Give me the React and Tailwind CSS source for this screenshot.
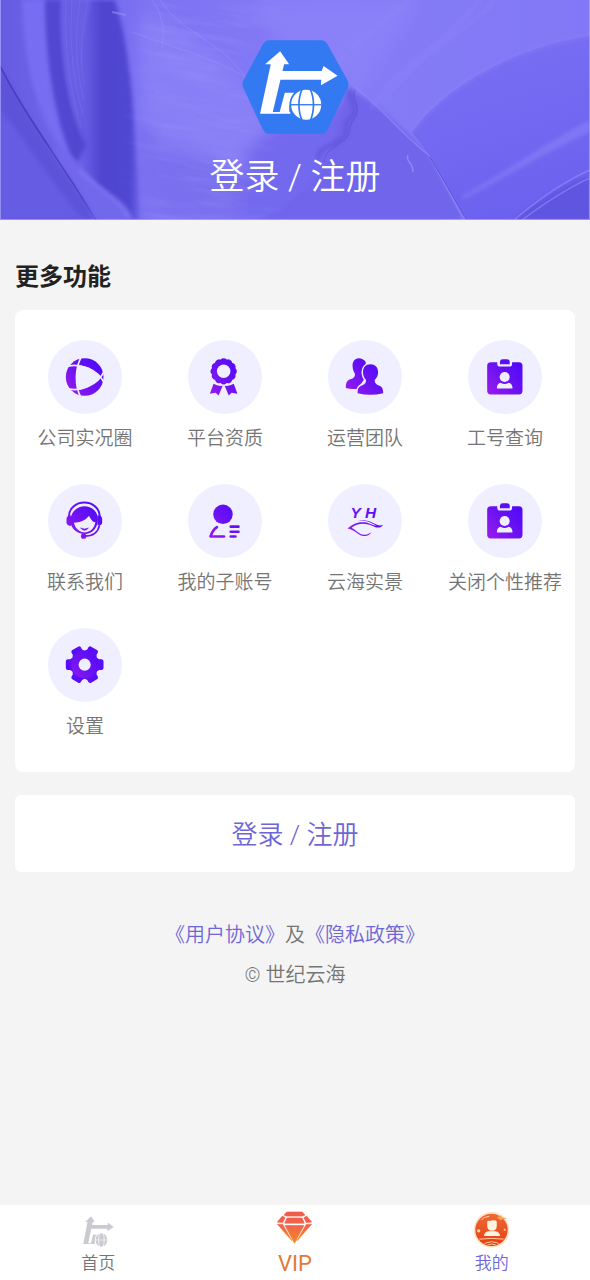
import React from 'react';

const FONT = 'font-[Roboto,"Noto_Sans_CJK_SC",sans-serif]';
const TILE = '#f0efff';

// The road / globe mark, shared by the header logo and the home tab
const LogoMark = ({ color, gap }) => (
  <g>
    <g fill={color}>
      <path d="M150 63L177 102H162L157 122H274L280 107L322 136L272 165L273 148H151L128 245H180L181 250H90L122 102H105Z" />
      <path d="M164 187H192C180 200 175 216 178 248H148Z" />
      <circle cx="228" cy="223" r="45" />
    </g>
    <g fill="none" stroke={gap} strokeWidth="5">
      <path d="M216 176C203 205 203 242 216 271M240 176C253 205 253 242 240 271" />
      <path d="M182 223H274" strokeWidth="4" />
    </g>
  </g>
);

const Logo = () => (
  <svg viewBox="36 27 320 286" className="w-[107px] h-24" aria-hidden="true">
    <path d="M118 42H272Q278 42 281 48L341 156Q344 162 341 168L281 292Q278 298 272 298H118Q112 298 109 292L51 168Q48 162 51 156L109 48Q112 42 118 42Z" fill="#337af2" stroke="#337af2" strokeWidth="24" strokeLinejoin="round" />
    <LogoMark color="#fff" gap="#337af2" />
  </svg>
);

// Brushed paint texture behind the header
const HeaderArt = () => (
  <svg viewBox="0 0 590 220" preserveAspectRatio="none" className="absolute inset-0 w-full h-full" aria-hidden="true">
    <defs>
      <linearGradient id="base" x1="0" y1="0" x2="1" y2="0">
        <stop offset="0" stopColor="#665ce2" />
        <stop offset="0.14" stopColor="#7168ee" />
        <stop offset="0.26" stopColor="#7d73f3" />
        <stop offset="0.55" stopColor="#857cf7" />
        <stop offset="1" stopColor="#8278f6" />
      </linearGradient>
      <linearGradient id="fold" x1="0" y1="0" x2="1" y2="0">
        <stop offset="0" stopColor="#4f45cf" stopOpacity="0" />
        <stop offset="0.4" stopColor="#4f45cf" />
        <stop offset="0.85" stopColor="#5046d2" />
        <stop offset="1" stopColor="#5e54dd" stopOpacity="0.5" />
      </linearGradient>
      <linearGradient id="wing" x1="0" y1="0" x2="0.3" y2="1">
        <stop offset="0" stopColor="#7b71f4" />
        <stop offset="1" stopColor="#6c62ef" />
      </linearGradient>
      <filter id="soft2"><feGaussianBlur stdDeviation="2" /></filter>
      <filter id="soft7"><feGaussianBlur stdDeviation="7" /></filter>
      <filter id="grain" x="0" y="0" width="100%" height="100%" colorInterpolationFilters="sRGB">
        <feTurbulence type="fractalNoise" baseFrequency="0.014 0.12" numOctaves="3" seed="4" />
        <feColorMatrix values="0 0 0 0 0.64  0 0 0 0 0.6  0 0 0 0 1  2.4 0 0 0 -1" />
      </filter>
      <linearGradient id="fade" x1="0" y1="0" x2="1" y2="0">
        <stop offset="0" stopColor="#fff" stopOpacity="0" />
        <stop offset="0.25" stopColor="#fff" />
        <stop offset="0.7" stopColor="#fff" />
        <stop offset="1" stopColor="#fff" stopOpacity="0" />
      </linearGradient>
      <mask id="brush" maskUnits="userSpaceOnUse" x="120" y="0" width="170" height="220">
        <rect x="120" y="0" width="170" height="220" fill="url(#fade)" />
      </mask>
    </defs>
    <rect width="590" height="220" fill="url(#base)" />
    <g filter="url(#soft7)">
      <path d="M140 10C200 40 240 60 268 130L230 160L140 120Z" fill="#8c83f7" opacity="0.7" />
      <path d="M140 130L240 160V220H145Z" fill="#7a70ef" />
      <path d="M240 150L345 85L460 220H240Z" fill="#7369ee" />
      <path d="M250 0H420L350 110L290 60Z" fill="#8c82f8" opacity="0.7" />
      <path d="M150 130L230 118L262 140L236 168L160 150Z" fill="#8a80f6" opacity="0.6" />
    </g>
    <path d="M22 0H46C48 70 58 130 74 162C40 130 24 70 22 0Z" fill="#776df2" filter="url(#soft2)" />
    <path d="M45 0H62C60 60 72 110 86 145L76 166C54 120 46 60 45 0Z" fill="#5147d0" filter="url(#soft2)" />
    <path d="M62 0H98C84 40 78 90 84 140C66 100 60 50 62 0Z" fill="#695fe4" filter="url(#soft2)" />
    <path d="M92 0H115C134 60 136 150 140 220H128C100 190 82 170 76 156C78 90 84 40 92 0Z" fill="url(#fold)" filter="url(#soft2)" />
    <path d="M0 66C30 120 60 165 100 220H0Z" fill="#5d53d9" filter="url(#soft2)" />
    <path d="M0 110C30 145 48 180 84 220H0Z" fill="#665ce4" filter="url(#soft2)" />
    <path d="M0 66C28 120 50 145 96 220" fill="none" stroke="#453bbb" strokeWidth="1.5" />
    <path d="M76 160C92 190 125 195 134 220H94C86 195 66 170 50 145Z" fill="#7268ec" filter="url(#soft2)" />
    <path d="M78 170C100 190 120 198 130 220" fill="none" stroke="#958cfa" strokeWidth="2" opacity="0.6" filter="url(#soft2)" />
    <path d="M66 0C64 50 70 90 82 130M72 0C69 45 73 80 83 115M80 0C74 40 76 70 84 100M88 0C80 40 80 60 84 85" fill="none" stroke="#8a81f6" strokeWidth="1" opacity="0.25" />

    <path d="M345 88C370 98 400 125 429 155L464 220H260C300 200 330 170 334 140C338 115 344 110 345 88Z" fill="#6f65eb" filter="url(#soft2)" />
    <path d="M352 85C380 104 400 134 429 155L464 220" fill="none" stroke="#938af8" strokeWidth="1.2" opacity="0.7" />
    <path d="M430 157L467 220" fill="none" stroke="#574dd2" strokeWidth="1" />
    <path d="M352 88C344 100 362 106 350 118C340 130 352 132 340 140C330 148 318 146 318 160" fill="none" stroke="#5c52d6" strokeWidth="3" filter="url(#soft2)" />
    <path d="M355 90C350 101 364 107 353 120C347 130 353 135 341 142C332 149 325 152 324 162" fill="none" stroke="#574dcf" strokeWidth="1" opacity="0.6" />
    <path d="M408 155C405 162 413 161 413 172" fill="none" stroke="#a49cff" strokeWidth="1.5" opacity="0.6" />
    <path d="M412 132C445 85 520 45 590 36V220H468L430 156Z" fill="url(#wing)" />
    <path d="M412 132C445 85 520 45 590 36" fill="none" stroke="#8f86f9" strokeWidth="2" opacity="0.6" filter="url(#soft2)" />
    <path d="M462 196C500 175 550 140 590 120V132C550 150 500 180 462 200Z" fill="#8b82f8" opacity="0.6" filter="url(#soft2)" />
    <path d="M512 220C540 200 565 183 590 176V220Z" fill="#5f55e0" filter="url(#soft2)" />
    <path d="M514 220C540 198 565 181 590 170M522 220C545 203 570 187 590 178" fill="none" stroke="#a098fb" strokeWidth="1.5" opacity="0.5" />
    <path d="M160 0C180 32 225 44 246 78M152 0C165 20 164 30 162 48M246 78C220 60 180 50 132 32" fill="none" stroke="#a098fc" strokeWidth="1" opacity="0.4" />
    <path d="M112 12L126 15" stroke="#a39bff" strokeWidth="2" opacity="0.5" />
    <path d="M370 110C400 60 430 60 480 0M385 100C420 50 470 30 495 0M320 80C350 50 370 30 410 0" fill="none" stroke="#9c94fc" strokeWidth="2" opacity="0.35" filter="url(#soft2)" />
    <g mask="url(#brush)">
      <rect x="100" y="-40" width="220" height="300" filter="url(#grain)" opacity="0.25" transform="rotate(10 200 110)" />
    </g>
    <path d="M0.5 0V219.5H589.5V0" fill="none" stroke="#b9b4ff" opacity="0.6" />
  </svg>
);

const CircleIcon = () => (
  <g>
    <circle cx="109" cy="110" r="56" />
    <path d="M88 75C115 76 142 90 155 110C142 130 115 146 88 149C82 125 82 99 88 75Z" fill={TILE} />
    <path d="M99 50C80 85 80 135 97 170M50 80C90 66 150 86 168 130M50 142C90 158 150 136 168 90" fill="none" stroke={TILE} strokeWidth="5" />
  </g>
);

const AwardIcon = () => (
  <g>
    {[0, 30, 60, 90, 120, 150, 180, 210, 240, 270, 300, 330].map((a) => (
      <circle key={a} cx="106" cy="64" r="10" transform={`rotate(${a} 106 93)`} />
    ))}
    <circle cx="106" cy="93" r="36" />
    <circle cx="106" cy="93" r="20" fill={TILE} />
    <path d="M76 130Q88 138 103 136L91 165L82 157L65 160Z" />
    <path d="M136 130Q124 138 109 136L121 165L130 157L147 160Z" />
  </g>
);

const TeamIcon = () => (
  <g>
    <path d="M92 54C80 54 73 63 73 76C73 87 76 94 80 100C80 110 77 113 66 117C56 121 53 127 53 143Q68 147 88 145L112 110V65Q104 54 92 54Z" />
    <path d="M126 72C112 72 104 82 104 95C104 107 108 113 113 119C113 129 109 132 99 136C90 140 88 146 88 158Q126 167 164 158C164 146 162 140 153 136C143 132 139 129 139 119C144 113 149 107 149 95C149 82 140 72 126 72Z" stroke={TILE} strokeWidth="9" paintOrder="stroke" />
  </g>
);

const BadgeIcon = () => (
  <g>
    <rect x="57" y="66" width="105" height="96" rx="11" />
    <rect x="87" y="50" width="44" height="29" rx="8" fill={TILE} />
    <path d="M95 72V64Q96 57 103 57H116Q123 57 124 64V72Z" />
    <circle cx="109" cy="110" r="15" fill={TILE} />
    <path d="M86 144V139Q88 129 97 127Q109 134 121 127Q130 129 132 139V144Z" fill={TILE} />
  </g>
);

const ServiceIcon = () => (
  <g>
    <path d="M62 98C63 41 153 41 154 98" fill="none" stroke="url(#purple)" strokeWidth="6" />
    <path d="M69 94V124H64Q55 122 55 114V104Q55 96 64 94Z" />
    <path d="M147 94V124H152Q161 122 161 114V104Q161 96 152 94Z" />
    <path d="M68 120C62 88 84 66 108 66C132 66 151 84 148 110C146 135 128 149 108 149C88 147 73 137 68 120Z" />
    <path d="M77 115C94 115 112 108 121 95C126 98 128 112 141 114C138 131 126 144 108 144C92 142 80 130 77 115Z" fill={TILE} />
    <path d="M97 131Q108 137 120 131Q109 144 97 131Z" stroke="url(#purple)" strokeWidth="2" />
    <path d="M153 122C149 144 132 155 108 155" fill="none" stroke={TILE} strokeWidth="11" />
    <path d="M153 122C149 144 132 155 108 155" fill="none" stroke="url(#purple)" strokeWidth="5" />
    <circle cx="106" cy="155" r="8" />
  </g>
);

const SubAccountIcon = () => (
  <g>
    <circle cx="104" cy="90" r="29" />
    <path d="M86 128C77 134 71 143 67 156H107M127 127H150M127 142H150M127 156H141" fill="none" stroke="url(#purple)" strokeWidth="8" strokeLinecap="round" strokeLinejoin="round" />
  </g>
);

const YunhaiIcon = () => (
  <g>
    <text x="67" y="101" fontSize="46" fontWeight="700" fontStyle="italic" fontFamily="Liberation Sans, sans-serif">Y</text>
    <text x="110" y="101" fontSize="46" fontWeight="700" fontStyle="italic" fontFamily="Liberation Sans, sans-serif">H</text>
    <path d="M88 111C112 103 128 113 142 120C150 124 157 124 164 121C157 132 147 131 136 126C113 115 88 115 70 130C84 137 92 150 107 151C118 152 124 147 129 142C124 153 114 157 102 154C87 150 79 135 58 132C73 119 89 111 110 114C122 116 134 124 145 125C132 117 112 105 88 111Z" />
  </g>
);

const GearIcon = () => (
  <g>
    {[0, 60, 120, 180, 240, 300].map((a) => (
      <path key={a} d="M140 85L152 93H160Q165 94 165 99V119Q165 124 160 125H152L140 133Z" transform={`rotate(${a} 109 109)`} />
    ))}
    <circle cx="109" cy="109" r="40" />
    <circle cx="109" cy="109" r="18" fill={TILE} />
  </g>
);

const features = [
  { label: '公司实况圈', icon: CircleIcon },
  { label: '平台资质', icon: AwardIcon },
  { label: '运营团队', icon: TeamIcon },
  { label: '工号查询', icon: BadgeIcon },
  { label: '联系我们', icon: ServiceIcon },
  { label: '我的子账号', icon: SubAccountIcon },
  { label: '云海实景', icon: YunhaiIcon },
  { label: '关闭个性推荐', icon: BadgeIcon },
  { label: '设置', icon: GearIcon },
];

const Feature = ({ label, icon: Icon }) => (
  <button type="button" className="flex flex-col items-center gap-[11px] pb-[31px]">
    <span className="w-[74px] h-[74px] rounded-full bg-[#f0efff]">
      <svg viewBox="0 0 220 220" className="w-full h-full" fill="url(#purple)" aria-hidden="true">
        <Icon />
      </svg>
    </span>
    <span className="text-[19px] leading-7 text-[#757575] whitespace-nowrap">{label}</span>
  </button>
);

const DiamondIcon = () => (
  <svg viewBox="650 33 110 98" className="w-[37px] h-[33px]" aria-hidden="true">
    <defs>
      <linearGradient id="gem" x1="0" y1="36" x2="0" y2="130" gradientUnits="userSpaceOnUse">
        <stop offset="0" stopColor="#f2594b" />
        <stop offset="0.45" stopColor="#f0654a" />
        <stop offset="1" stopColor="#f58a1f" />
      </linearGradient>
    </defs>
    <g fill="url(#gem)" stroke="url(#gem)" strokeWidth="2" strokeLinejoin="round">
      <path d="M682 36H728L736 45L729 48H681L674 45Z" />
      <path d="M669 48L677 53L670 67L654 66Z" />
      <path d="M741 48L733 53L740 67L756 66Z" />
      <path d="M683 54H727L734 69H676Z" />
      <path d="M654 72L670 73L697 121Z" />
      <path d="M756 72L740 73L713 121Z" />
      <path d="M677 76H733L705 129Z" />
    </g>
  </svg>
);

const ProfileIcon = () => (
  <svg viewBox="100 32 112 112" className="w-[37px] h-[37px]" aria-hidden="true">
    <defs>
      <linearGradient id="coin" x1="0" y1="0" x2="0" y2="1">
        <stop offset="0" stopColor="#ee6a35" />
        <stop offset="1" stopColor="#e63e14" />
      </linearGradient>
      <clipPath id="coinClip"><circle cx="156" cy="89" r="47" /></clipPath>
    </defs>
    <circle cx="156" cy="89" r="54" fill="#fde3c4" />
    <circle cx="156" cy="89" r="49" fill="url(#coin)" />
    <g clipPath="url(#coinClip)" fill="none" stroke="#ffc99a" strokeWidth="3">
      <path d="M105 118Q156 112 207 118" />
      <path d="M124 138Q156 112 190 138M136 140Q156 124 178 140" />
    </g>
    <path d="M143 66Q143 60 150 62Q160 59 169 61Q172 62 172 68V77Q172 92 158 92Q143 92 143 77Z" fill="#fff3e2" />
    <path d="M133 108Q134 95 147 93H168Q181 95 182 108Z" fill="#fff3e2" />
    <path d="M126 58Q132 50 148 48" fill="none" stroke="#ffd6b0" strokeWidth="3" strokeLinecap="round" />
    <path d="M172 52L180 48L184 44L188 51L204 54L190 57L182 60L178 55Z" fill="#f7a354" />
    <circle cx="117" cy="92" r="5" fill="#ffd9ae" />
    <circle cx="196" cy="89" r="3" fill="#ffd9ae" />
  </svg>
);

const TabBar = () => (
  <nav className="grid grid-cols-3 h-[75px] bg-white text-[17px] text-[#757575]">
    <a href="#home" className="flex flex-col items-center pt-[11px]">
      <svg viewBox="88 62 236 208" preserveAspectRatio="none" className="w-[31px] h-[31px]" aria-hidden="true">
        <LogoMark color="#cacad0" gap="#fff" />
      </svg>
      <span className="mt-1 leading-6">首页</span>
    </a>
    <a href="#vip" className="flex flex-col items-center pt-[6px] text-[#e07a3a]">
      <DiamondIcon />
      <span className="mt-2 leading-6 text-[22px] font-normal">VIP</span>
    </a>
    <a href="#me" className="flex flex-col items-center pt-[6px] text-[#6f66d6]">
      <ProfileIcon />
      <span className="mt-[3px] leading-6">我的</span>
    </a>
  </nav>
);

export default function App() {
  return (
    <div className={`${FONT} font-[350] min-h-screen flex flex-col bg-[#f4f4f4] text-[#757575]`}>
      <svg className="absolute w-0 h-0" aria-hidden="true">
        <defs>
          <linearGradient id="purple" x1="50" y1="160" x2="160" y2="60" gradientUnits="userSpaceOnUse">
            <stop offset="0" stopColor="#9c1cec" />
            <stop offset="0.5" stopColor="#6d12f2" />
            <stop offset="1" stopColor="#4a08fb" />
          </linearGradient>
        </defs>
      </svg>

      <header className="relative h-[220px] overflow-hidden">
        <HeaderArt />
        <button type="button" className="relative w-full flex flex-col items-center pt-[39px] text-white">
          <Logo />
          <span className="mt-[17px] text-[35px] leading-[52px]">登录 / 注册</span>
        </button>
      </header>

      <main className="flex-1 px-[15px] pt-[41px]">
        <h2 className="text-2xl leading-8 font-bold text-[#222222]">更多功能</h2>
        <section className="grid grid-cols-4 mt-[17px] pt-[30px] rounded-lg bg-white">
          {features.map((item) => (
            <Feature key={item.label} {...item} />
          ))}
        </section>

        <button type="button" className="block w-full mt-[23px] pt-[19px] pb-4 rounded-md bg-white text-[26px] leading-[42px] text-[#6f66d6]">
          登录 / 注册
        </button>

        <div className="mt-[43px] text-center text-[20px] leading-10">
          <p>
            <a href="#terms" className="text-[#6f66d6]">《用户协议》</a>及<a href="#privacy" className="text-[#6f66d6]">《隐私政策》</a>
          </p>
          <p>© 世纪云海</p>
        </div>
      </main>

      <TabBar />
    </div>
  );
}
